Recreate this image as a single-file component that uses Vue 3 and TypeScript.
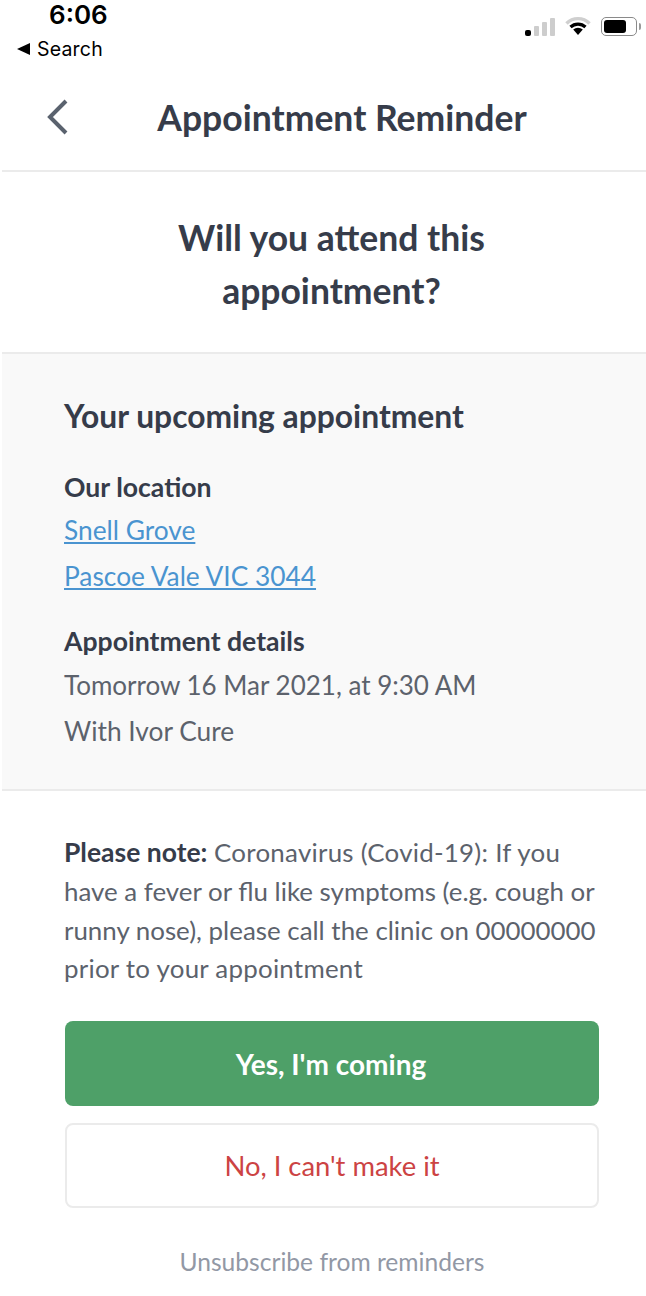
<script setup lang="ts">
const bars: number[] = [6, 10, 14, 18]
</script>

<template>
  <div class="screen">
    <header class="status">
      <div class="status-left">
        <div class="time">6:06</div>
        <div class="crumb"><span class="tri"></span>Search</div>
      </div>
      <div class="status-right">
        <div class="signal">
          <span v-for="(h, i) in bars" :key="i" class="bar" :class="{ on: i === 0 }" :style="{ height: h + 'px' }"></span>
        </div>
        <svg class="wifi" width="26" height="20" viewBox="0 0 26 20">
          <path d="M1.5 7.5 A16 16 0 0 1 24.5 7.5" fill="none" stroke="#cfcfcf" stroke-width="3.4" />
          <path d="M5.5 11 A11 11 0 0 1 20.5 11" fill="none" stroke="#000" stroke-width="3.2" />
          <path d="M13 19 L8.2 13.6 A7 7 0 0 1 17.8 13.6 Z" fill="#000" />
        </svg>
        <div class="battery"><span class="level"></span></div>
        <span class="nub"></span>
      </div>
    </header>

    <div class="content">
      <nav class="nav">
        <svg class="back" width="24" height="38" viewBox="0 0 24 38">
          <path d="M21 3 L5 19 L21 35" fill="none" stroke="#5a626e" stroke-width="4" />
        </svg>
        <h1 class="nav-title">Appointment Reminder</h1>
      </nav>

      <section class="question">
        <h2>Will you attend this<br />appointment?</h2>
      </section>

      <section class="details">
        <h3>Your upcoming appointment</h3>
        <h4 class="first">Our location</h4>
        <a class="line top">Snell Grove</a>
        <a class="line">Pascoe Vale VIC 3044</a>
        <h4 class="second">Appointment details</h4>
        <p class="line top-small">Tomorrow 16 Mar 2021, at 9:30 AM</p>
        <p class="line">With Ivor Cure</p>
      </section>

      <section class="actions">
        <p class="note"><b>Please note:</b> <span class="loose">Coronavirus (Covid-19): If you</span> have a fever or flu like symptoms (e.g. cough or runny nose), please call the clinic on 00000000 <span class="loose">prior to your appointment</span></p>
        <button class="btn yes">Yes, I'm coming</button>
        <button class="btn no">No, I can't make it</button>
        <a class="unsub">Unsubscribe from reminders</a>
      </section>
    </div>
  </div>
</template>

<style>
html, body { margin: 0; background: #fff; }
</style>

<style scoped>
.screen {
  width: 646px;
  height: 1296px;
  overflow: hidden;
  background: #fff;
  font-family: Lato, "Liberation Sans", sans-serif;
  color: #363c4a;
}
.status {
  height: 80px;
  display: flex;
  justify-content: space-between;
  font-family: Inter, "Liberation Sans", sans-serif;
  color: #000;
}
.status-left { padding-left: 17px; }
.time {
  font-size: 26px;
  font-weight: 600;
  line-height: 30px;
  margin-left: 32px;
}
.crumb {
  display: flex;
  align-items: center;
  font-size: 19.5px;
  line-height: 22px;
  margin-top: 8px;
  letter-spacing: 0.2px;
}
.tri {
  width: 0;
  height: 0;
  border-top: 6px solid transparent;
  border-bottom: 6px solid transparent;
  border-right: 13px solid #000;
  margin-right: 7px;
}
.status-right {
  display: flex;
  align-items: flex-end;
  height: 36px;
  padding-right: 5px;
}
.signal { display: flex; align-items: flex-end; gap: 3px; margin-right: 10px; }
.bar { width: 5px; background: #cdcdcd; border-radius: 1px; }
.bar.on { width: 6px; background: #000; border-radius: 2px; }
.wifi { margin-right: 10px; }
.battery {
  width: 36px;
  height: 19px;
  border: 1.5px solid #8a8a8a;
  border-radius: 5px;
  padding: 1.5px 2px;
  box-sizing: border-box;
}
.level { display: block; width: 22px; height: 13px; background: #000; border-radius: 3px; }
.nub { width: 2px; height: 7px; background: #999; margin: 0 0 6px 2px; border-radius: 0 2px 2px 0; }
.content { margin-left: 2px; }
.nav {
  height: 90px;
  border-bottom: 2px solid #ebebeb;
  position: relative;
  display: flex;
  align-items: center;
  justify-content: center;
  padding-left: 36px;
  box-sizing: content-box;
}
.back { position: absolute; left: 43px; top: 18px; }
.nav-title {
  margin: 0 0 14px;
  font-size: 35.5px;
  font-weight: 700;
  line-height: 40px;
}
.question {
  height: 182px;
  padding: 4px 0 0 15px;
  box-sizing: border-box;
  border-bottom: 2px solid #ebebeb;
  display: flex;
  align-items: center;
  justify-content: center;
}
.question h2 {
  margin: 0;
  font-size: 35.5px;
  line-height: 53px;
  font-weight: 700;
  text-align: center;
}
.details {
  background: #f9f9f9;
  height: 437px;
  border-bottom: 2px solid #ebebeb;
  padding: 42px 62px 0 62px;
  box-sizing: border-box;
}
.details h3 { margin: 0; font-size: 31.8px; line-height: 40px; font-weight: 700; }
.details h4 { margin: 0; font-size: 26.6px; line-height: 34px; font-weight: 700; }
.details h4.first { margin-top: 34px; }
.details h4.second { margin-top: 25px; }
.line {
  display: block;
  margin: 0;
  font-size: 26.3px;
  line-height: 46px;
  color: #5c626c;
}
.line.top { margin-top: 3px; }
.line.top-small { margin-top: 4px; font-size: 26px; }
a.line { color: #4a94d0; text-decoration: underline; }
.actions { padding: 42px 47px 0 63px; display: flex; flex-direction: column; }
.note {
  margin: 0 0 0 -1px;
  font-size: 25.9px;
  line-height: 38.8px;
  color: #5c626c;
}
.note b { color: #363c4a; font-weight: 700; font-size: 26.5px; }
.loose { letter-spacing: 0.25px; }
.btn {
  font-family: inherit;
  font-size: 28px;
  border-radius: 8px;
  height: 85px;
  width: 534px;
  box-sizing: border-box;
}
.yes { margin-top: 33px; background: #4ea068; border: none; color: #fff; font-weight: 700; padding-right: 8px; }
.no { margin-top: 17px; background: #fff; border: 2px solid #ebebeb; color: #cc4343; font-size: 27.4px; }
.unsub {
  margin-top: 37px;
  width: 534px;
  text-align: center;
  font-size: 24.6px;
  line-height: 34px;
  color: #9298a5;
}
</style>
